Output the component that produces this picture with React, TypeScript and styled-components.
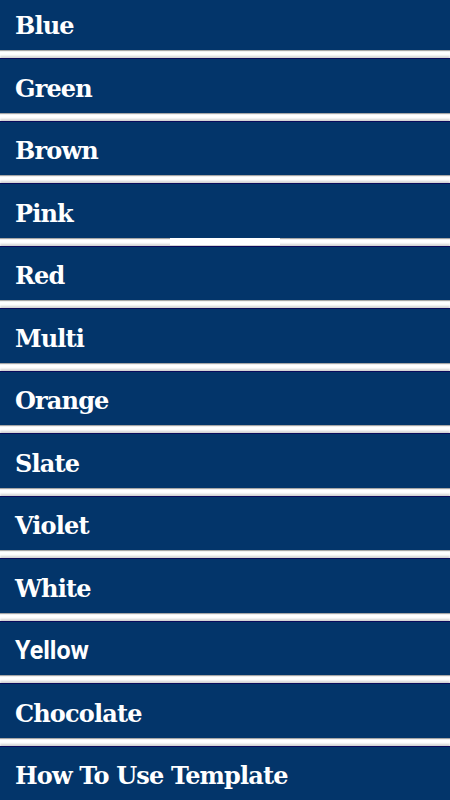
import styled, { createGlobalStyle } from 'styled-components';

const GlobalStyle = createGlobalStyle`
  html, body {
    margin: 0;
    padding: 0;
    background: #ffffff;
    overflow: hidden;
  }
`;

type ItemType = {
  label: string;
  sans?: boolean;
  patch?: boolean;
};

const items: ItemType[] = [
  { label: 'Blue' },
  { label: 'Green' },
  { label: 'Brown' },
  { label: 'Pink', patch: true },
  { label: 'Red' },
  { label: 'Multi' },
  { label: 'Orange' },
  { label: 'Slate' },
  { label: 'Violet' },
  { label: 'White' },
  { label: 'Yellow', sans: true },
  { label: 'Chocolate' },
  { label: 'How To Use Template' },
];

const StyledList = styled.div`
  display: flex;
  flex-direction: column;
  gap: 8px;
  margin-top: -4.5px;
  width: 450px;
  height: 804.5px;
  overflow: hidden;
`;

const StyledRow = styled.div<{ $sans?: boolean; $patch?: boolean }>`
  flex: none;
  position: relative;
  display: flex;
  align-items: center;
  box-sizing: border-box;
  height: 54.5px;
  padding: 5px 0 0 15px;
  background: #03356a;
  border-top: 1px solid #0b0b5c;
  box-shadow:
    0 1px 1px rgba(0, 0, 0, 0.35),
    0 -2px 2px rgba(0, 0, 0, 0.18);
  color: #ffffff;
  font-family: ${({ $sans }) =>
    $sans
      ? "Roboto, 'Noto Sans', sans-serif"
      : "'DejaVu Serif', 'Liberation Serif', serif"};
  font-weight: bold;
  font-size: ${({ $sans }) => ($sans ? '25px' : '24px')};
  letter-spacing: ${({ $sans }) => ($sans ? '0' : '-0.85px')};

  ${({ $patch }) =>
    $patch &&
    `
    &::after {
      content: '';
      position: absolute;
      top: 100%;
      left: 170px;
      width: 110px;
      height: 7.5px;
      background: #ffffff;
      z-index: 2;
    }
  `}
`;

export default function App() {
  return (
    <>
      <GlobalStyle />
      <StyledList>
        {items.map(({ label, sans, patch }) => (
          <StyledRow key={label} $sans={sans} $patch={patch}>
            {label}
          </StyledRow>
        ))}
      </StyledList>
    </>
  );
}
